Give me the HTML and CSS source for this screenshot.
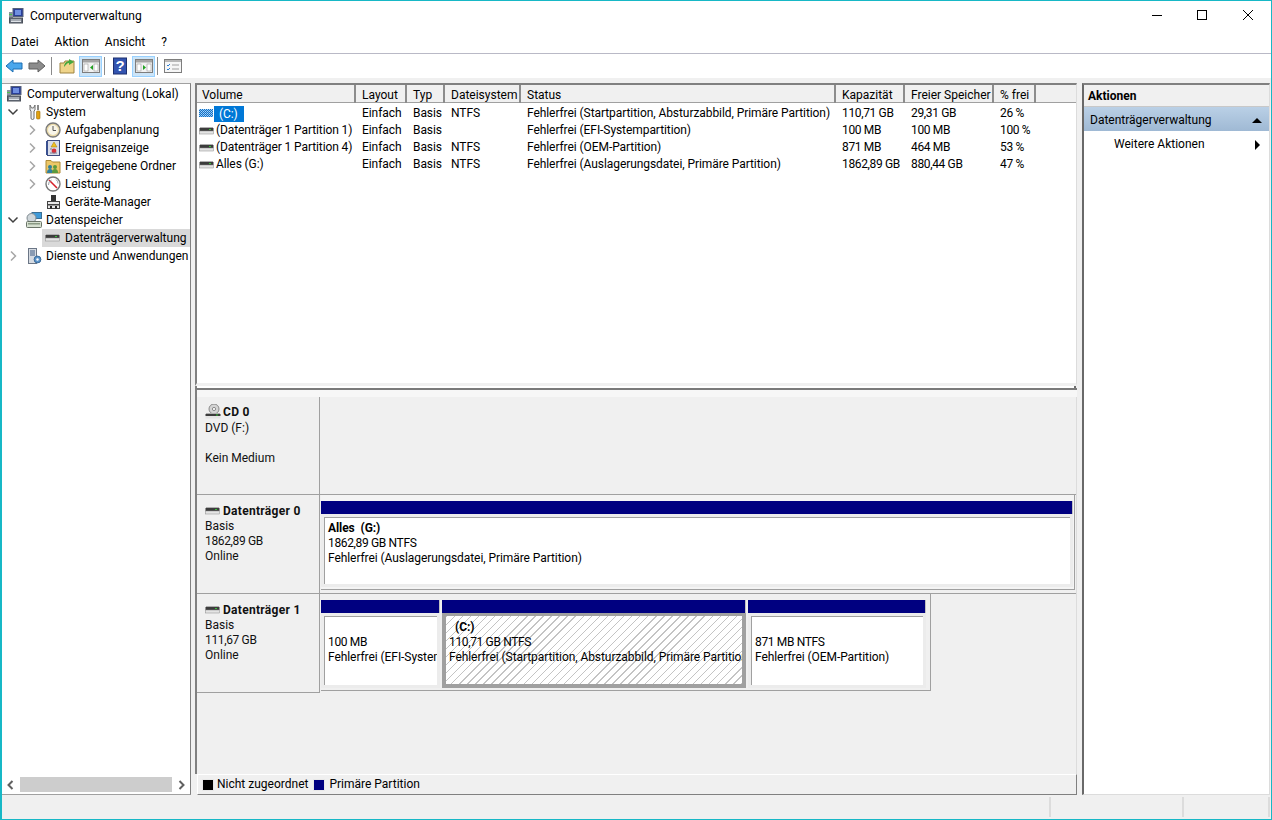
FILE: index.html
```html
<!DOCTYPE html>
<html lang="de">
<head>
<meta charset="utf-8">
<title>Computerverwaltung</title>
<link rel="stylesheet" href="styles.css">
</head>
<body>
<svg class="defs" width="0" height="0">
  <defs>
    <symbol id="computer" viewBox="0 0 16 16">
      <rect x="5" y="0.5" width="10" height="8" fill="#2a3f9a" stroke="#55617a"/>
      <rect x="7" y="2" width="6" height="5" fill="#6f8fe0"/>
      <rect x="1" y="4" width="4" height="6" fill="#8a93a0"/>
      <rect x="1.5" y="10" width="13" height="5" fill="#6d7480" stroke="#4a505a"/>
      <path d="M3 12h10M3 13.5h10" stroke="#dfe3e8"/>
      <rect x="1" y="6" width="3" height="1" fill="#4cc04c"/>
    </symbol>
    <symbol id="disk" viewBox="0 0 16 16">
      <rect x="1" y="4" width="13" height="1" fill="#b0b0b0"/>
      <rect x="0.5" y="5" width="14" height="3" fill="#3c3c3c"/>
      <rect x="0.5" y="8" width="14" height="3" fill="#e4e4e4" stroke="#888" stroke-width="0.5"/>
      <rect x="10" y="6" width="2" height="1" fill="#35c435"/>
    </symbol>
    <symbol id="vol-c" viewBox="0 0 16 16">
      <rect x="0" y="3" width="14" height="8" fill="#1570c4"/>
      <path d="M0 3.500h14M0 5.500h14M0 7.500h14M0 9.500h14" stroke="#a9d6fa" stroke-dasharray="1 1"/>
      <path d="M1 4.500h13M1 6.500h13M1 8.500h13M1 10.500h13" stroke="#7dbcf2" stroke-dasharray="1 1"/>
    </symbol>
    <symbol id="cd" viewBox="0 0 16 16">
      <circle cx="9" cy="5" r="5" fill="#d4d4d4" stroke="#8a8a8a"/>
      <circle cx="9" cy="5" r="1.6" fill="#fff" stroke="#8a8a8a"/>
      <rect x="1" y="9" width="14" height="1" fill="#b0b0b0"/>
      <rect x="0.5" y="10" width="15" height="2" fill="#3c3c3c"/>
      <rect x="0.5" y="12" width="15" height="2.5" fill="#e4e4e4"/>
      <rect x="11" y="10.500" width="2" height="1" fill="#35c435"/>
    </symbol>
    <symbol id="tools" viewBox="0 0 16 16">
      <path d="M4 1v5l1 1v7a1.5 1.5 0 0 0 3 0V7l1-1V1L7.5 4h-2z" fill="#eef0f2" stroke="#6e6e6e"/>
      <path d="M12 1v5" stroke="#8a8a8a" stroke-width="2"/>
      <rect x="10.5" y="7" width="3.5" height="8" rx="1" fill="#e2a10f" stroke="#9b6d08" stroke-width=".6"/>
    </symbol>
    <symbol id="clock" viewBox="0 0 16 16">
      <circle cx="8" cy="8" r="7" fill="#e9d9a8" stroke="#7a7a7a" stroke-width="1.4"/>
      <circle cx="8" cy="8" r="5" fill="#f8f5e9"/>
      <path d="M8 4v4.5h3" fill="none" stroke="#555"/>
    </symbol>
    <symbol id="event" viewBox="0 0 16 16">
      <rect x="2.5" y="0.5" width="12" height="15" fill="#d8dce8" stroke="#3e4b7e"/>
      <rect x="1" y="1" width="2" height="14" fill="#39508f"/>
      <path d="M9 2l3 5H6z" fill="#f0c020" stroke="#a37b0c" stroke-width=".5"/>
      <circle cx="9" cy="11" r="2.4" fill="#d7313a"/>
      <path d="M5 9h2M5 13h7" stroke="#7a7f92"/>
    </symbol>
    <symbol id="share" viewBox="0 0 16 16">
      <path d="M1 2.5h5l1.5 1.5h7.5v11H1z" fill="#ecc767" stroke="#ad8a34"/>
      <circle cx="5" cy="9" r="2" fill="#2f7f9e"/>
      <path d="M2 15c0-3 1-4 3-4s3 1 3 4z" fill="#2f7f9e"/>
      <circle cx="10" cy="9" r="2" fill="#5a9a3c"/>
      <path d="M7 15c0-3 1-4 3-4s3 1 3 4z" fill="#5a9a3c"/>
    </symbol>
    <symbol id="perf" viewBox="0 0 16 16">
      <circle cx="8" cy="8" r="7" fill="#fff" stroke="#777" stroke-width="1.4"/>
      <path d="M4 4l8 8" stroke="#d5202a" stroke-width="1.6"/>
      <path d="M3.5 9a5 5 0 0 1 3-5M11 3.5a5 5 0 0 1 2 4" fill="none" stroke="#9aa0a8"/>
    </symbol>
    <symbol id="device" viewBox="0 0 16 16">
      <rect x="6" y="1" width="5" height="6" fill="#333"/>
      <rect x="2.5" y="7.5" width="12" height="7" fill="#e8e8e8" stroke="#444"/>
      <rect x="2" y="10" width="13" height="1.5" fill="#444"/>
      <rect x="5" y="12" width="2" height="2.5" fill="#222"/>
      <rect x="10" y="12" width="2" height="2.5" fill="#222"/>
    </symbol>
    <symbol id="storage" viewBox="0 0 16 16">
      <rect x="6" y="0.5" width="9.5" height="6" fill="#3f9ad8" stroke="#3a6f95"/>
      <circle cx="5.5" cy="6" r="4.5" fill="#cfd6da" stroke="#7f8a90"/>
      <rect x="0.5" y="9.5" width="15" height="6" rx="1" fill="#d6e0d0" stroke="#6a7468"/>
      <rect x="2" y="11" width="12" height="1.5" fill="#8a9a84"/>
    </symbol>
    <symbol id="services" viewBox="0 0 16 16">
      <rect x="2.5" y="0.5" width="8" height="15" fill="#d6dbe2" stroke="#6b7686"/>
      <path d="M4 3h5M4 5h5M4 7h5" stroke="#3f5d85"/>
      <circle cx="11.5" cy="11.5" r="3.4" fill="#5b93c9" stroke="#3b6c9b"/>
      <circle cx="11.5" cy="11.5" r="1.2" fill="#fff"/>
    </symbol>
    <symbol id="chev-r" viewBox="0 0 16 16">
      <path d="M6 3.5L10.500 8 6 12.500" fill="none" stroke="#a6a6a6" stroke-width="1.500"/>
    </symbol>
    <symbol id="chev-d" viewBox="0 0 16 16">
      <path d="M3.500 5.500L8 10l4.500-4.500" fill="none" stroke="#404040" stroke-width="1.500"/>
    </symbol>
    <symbol id="pane" viewBox="0 0 20 20">
      <rect x="1.500" y="3.500" width="17" height="13" fill="#f2f2f2" stroke="#7d7d7d"/>
      <rect x="2" y="4" width="16" height="2.500" fill="#a5a5a5"/>
      <rect x="3" y="8" width="4" height="7" fill="#fff" stroke="#9a9a9a" stroke-width=".6"/>
      <rect x="13" y="8" width="4" height="7" fill="#fff" stroke="#9a9a9a" stroke-width=".6"/>
    </symbol>
  </defs>
</svg>

<div class="window">
  <header class="titlebar">
    <svg class="ico title-ico"><use href="#computer"/></svg>
    <span class="title-text">Computerverwaltung</span>
    <div class="winctl">
      <svg class="winbtn" viewBox="0 0 45 30"><path d="M16 14.500h10" stroke="#000" fill="none"/></svg>
      <svg class="winbtn" viewBox="0 0 45 30"><rect x="16.500" y="9.500" width="9" height="9" stroke="#000" fill="none"/></svg>
      <svg class="winbtn" viewBox="0 0 45 30"><path d="M17 9l10 10M27 9L17 19" stroke="#000" fill="none"/></svg>
    </div>
  </header>

  <nav class="menubar">
    <span>Datei</span><span>Aktion</span><span>Ansicht</span><span>?</span>
  </nav>

  <div class="toolbar">
    <svg class="tool" viewBox="0 0 22 22"><path d="M3 11l7-6v3h9v6h-9v3z" fill="#4aa7ec" stroke="#1c6fb3"/></svg>
    <svg class="tool" viewBox="0 0 22 22"><path d="M19 11l-7-6v3H3v6h9v3z" fill="#8c8c8c" stroke="#5e5e5e"/></svg>
    <i class="sep"></i>
    <svg class="tool" viewBox="0 0 22 22"><path d="M4 8h4l1-2h9v12H4z" fill="#efd48a" stroke="#9d8340"/><path d="M8 12c0-4 3-6 5-6V4l5 3-5 3V8c-2 0-3 2-5 4z" fill="#46a83e"/></svg>
    <span class="tool-on"><svg class="paneico" viewBox="0 0 20 20"><use href="#pane"/><path d="M12 9v5l-3-2.500z" fill="#22a022"/></svg></span>
    <i class="sep"></i>
    <svg class="tool" viewBox="0 0 22 22"><rect x="4.500" y="3" width="13" height="16" fill="#3354b0" stroke="#1d2f6f"/><text x="11" y="16" class="help-q">?</text></svg>
    <span class="tool-on"><svg class="paneico" viewBox="0 0 20 20"><use href="#pane"/><path d="M9 9v5l3-2.500z" fill="#22a022"/></svg></span>
    <i class="sep"></i>
    <svg class="tool" viewBox="0 0 22 22"><rect x="2.500" y="4.500" width="17" height="13" fill="#f6f6f6" stroke="#7d7d7d"/><rect x="3" y="5" width="16" height="2" fill="#b8b8b8"/><path d="M5 10l1 1 2-2M5 14l1 1 2-2" stroke="#2a7fd6" fill="none"/><path d="M10 10h7M10 14h7" stroke="#a0a0a0"/></svg>
  </div>

  <main class="panes">
    <aside class="tree-pane">
      <div class="tree">
        <div class="node lv0"><span class="exp"></span><svg class="ico"><use href="#computer"/></svg><span>Computerverwaltung (Lokal)</span></div>
        <div class="node lv1"><svg class="exp"><use href="#chev-d"/></svg><svg class="ico"><use href="#tools"/></svg><span>System</span></div>
        <div class="node lv2"><svg class="exp"><use href="#chev-r"/></svg><svg class="ico"><use href="#clock"/></svg><span>Aufgabenplanung</span></div>
        <div class="node lv2"><svg class="exp"><use href="#chev-r"/></svg><svg class="ico"><use href="#event"/></svg><span>Ereignisanzeige</span></div>
        <div class="node lv2"><svg class="exp"><use href="#chev-r"/></svg><svg class="ico"><use href="#share"/></svg><span>Freigegebene Ordner</span></div>
        <div class="node lv2"><svg class="exp"><use href="#chev-r"/></svg><svg class="ico"><use href="#perf"/></svg><span>Leistung</span></div>
        <div class="node lv2"><span class="exp"></span><svg class="ico"><use href="#device"/></svg><span>Geräte-Manager</span></div>
        <div class="node lv1"><svg class="exp"><use href="#chev-d"/></svg><svg class="ico"><use href="#storage"/></svg><span>Datenspeicher</span></div>
        <div class="node lv2 has-sel"><span class="exp"></span><span class="sel"><svg class="ico"><use href="#disk"/></svg><span>Datenträgerverwaltung</span></span></div>
        <div class="node lv1"><svg class="exp"><use href="#chev-r"/></svg><svg class="ico"><use href="#services"/></svg><span>Dienste und Anwendungen</span></div>
      </div>
      <div class="hscroll">
        <svg class="arrow" viewBox="0 0 16 16"><path d="M10 4L6 8l4 4" fill="none" stroke="#606060" stroke-width="2"/></svg>
        <div class="track"></div>
        <svg class="arrow" viewBox="0 0 16 16"><path d="M6 4l4 4-4 4" fill="none" stroke="#606060" stroke-width="2"/></svg>
      </div>
    </aside>

    <section class="center-pane">
      <div class="list-pane">
        <div class="row head">
          <div>Volume</div><div>Layout</div><div>Typ</div><div>Dateisystem</div><div>Status</div><div>Kapazität</div><div>Freier Speicher</div><div>% frei</div><div></div>
        </div>
        <div class="row">
          <div class="vol"><svg class="ico"><use href="#vol-c"/></svg><span class="vol-sel">(C:)</span></div><div>Einfach</div><div>Basis</div><div>NTFS</div><div>Fehlerfrei (Startpartition, Absturzabbild, Primäre Partition)</div><div class="num">110,71 GB</div><div class="num">29,31 GB</div><div class="num">26 %</div>
        </div>
        <div class="row">
          <div class="vol"><svg class="ico"><use href="#disk"/></svg><span>(Datenträger 1 Partition 1)</span></div><div>Einfach</div><div>Basis</div><div></div><div>Fehlerfrei (EFI-Systempartition)</div><div class="num">100 MB</div><div class="num">100 MB</div><div class="num">100 %</div>
        </div>
        <div class="row">
          <div class="vol"><svg class="ico"><use href="#disk"/></svg><span>(Datenträger 1 Partition 4)</span></div><div>Einfach</div><div>Basis</div><div>NTFS</div><div>Fehlerfrei (OEM-Partition)</div><div class="num">871 MB</div><div class="num">464 MB</div><div class="num">53 %</div>
        </div>
        <div class="row">
          <div class="vol"><svg class="ico"><use href="#disk"/></svg><span>Alles (G:)</span></div><div>Einfach</div><div>Basis</div><div>NTFS</div><div>Fehlerfrei (Auslagerungsdatei, Primäre Partition)</div><div class="num">1862,89 GB</div><div class="num">880,44 GB</div><div class="num">47 %</div>
        </div>
      </div>
      <div class="list-gap"></div>
      <div class="splitter"></div>

      <div class="disks">
        <div class="disk disk-cd">
          <div class="disk-label">
            <div class="disk-name cd-name"><svg class="ico"><use href="#cd"/></svg><b>CD 0</b></div>
            <div>DVD (F:)</div>
            <div class="blank"></div>
            <div>Kein Medium</div>
          </div>
          <div class="disk-map"></div>
        </div>

        <div class="disk disk-0">
          <div class="disk-label">
            <div class="disk-name"><svg class="ico"><use href="#disk"/></svg><b>Datenträger 0</b></div>
            <div>Basis</div>
            <div class="num">1862,89 GB</div>
            <div>Online</div>
          </div>
          <div class="disk-map">
            <div class="parts parts-full">
              <div class="part part-all">
                <div class="bar"></div>
                <div class="pbody">
                  <div class="pline"><b>Alles&nbsp; (G:)</b></div>
                  <div class="pline num">1862,89 GB NTFS</div>
                  <div class="pline">Fehlerfrei (Auslagerungsdatei, Primäre Partition)</div>
                </div>
              </div>
            </div>
          </div>
        </div>

        <div class="disk disk-1">
          <div class="disk-label">
            <div class="disk-name"><svg class="ico"><use href="#disk"/></svg><b>Datenträger 1</b></div>
            <div>Basis</div>
            <div class="num">111,67 GB</div>
            <div>Online</div>
          </div>
          <div class="disk-map">
            <div class="parts parts-small">
              <div class="part part-efi">
                <div class="bar"></div>
                <div class="pbody">
                  <div class="pline">&nbsp;</div>
                  <div class="pline num">100 MB</div>
                  <div class="pline">Fehlerfrei (EFI-Systempartition)</div>
                </div>
              </div>
              <div class="part part-c">
                <div class="bar"></div>
                <div class="pbody hatch">
                  <div class="pline"><b class="c-name">(C:)</b></div>
                  <div class="pline num">110,71 GB NTFS</div>
                  <div class="pline">Fehlerfrei (Startpartition, Absturzabbild, Primäre Partition)</div>
                </div>
              </div>
              <div class="part part-oem">
                <div class="bar"></div>
                <div class="pbody">
                  <div class="pline">&nbsp;</div>
                  <div class="pline num">871 MB NTFS</div>
                  <div class="pline">Fehlerfrei (OEM-Partition)</div>
                </div>
              </div>
            </div>
          </div>
        </div>
        <div class="disk-rest"></div>
      </div>

      <div class="legend">
        <i class="swatch black"></i><span>Nicht zugeordnet</span>
        <i class="swatch navy"></i><span>Primäre Partition</span>
      </div>
    </section>

    <aside class="actions-pane">
      <div class="act-head">Aktionen</div>
      <div class="act-sel"><span>Datenträgerverwaltung</span><i class="tri-up"></i></div>
      <div class="act-item"><span>Weitere Aktionen</span><i class="tri-right"></i></div>
    </aside>
  </main>

  <footer class="statusbar">
    <div class="st st-a"></div><div class="st st-b"></div><div class="st st-c"></div>
  </footer>
</div>
</body>
</html>
```

FILE: styles.css
```css
* { box-sizing: border-box; }
html, body { margin: 0; padding: 0; height: 100%; overflow: hidden; }
body {
  font-family: Roboto, "Open Sans", "Liberation Sans", sans-serif;
  font-size: 12px;
  line-height: 15px;
  color: #000;
  background: #fff;
}
.defs { position: absolute; }
.ico { width: 16px; height: 16px; flex: none; display: block; }
b { font-weight: 700; }

.window {
  width: 1272px; height: 820px;
  border: 1px solid #17b8c6;
  border-left-width: 2px;
  display: flex; flex-direction: column;
  background: #f0f0f0;
}

.titlebar { height: 30px; background: #fff; display: flex; align-items: center; padding-left: 6px; flex: none; }
.title-ico { margin-right: 6px; }
.title-text { flex: 1; }
.winctl { display: flex; }
.winbtn { width: 45px; height: 30px; display: block; }

.menubar {
  height: 23px; background: #fff; flex: none;
  display: flex; align-items: center; gap: 16px; padding: 0 0 0 9px;
  border-bottom: 1px solid #b9b9c6;
}

.toolbar { height: 24px; background: #fff; flex: none; display: flex; align-items: center; padding-left: 1px; }
.tool { width: 22px; height: 22px; display: block; flex: none; margin-right: 1px; }
.sep { width: 1px; height: 18px; background: #8a8a8a; margin: 0 4px 0 2px; flex: none; }
.tool-on { width: 23px; height: 21px; background: #cce4f7; border: 1px solid #99d1ff; display: flex; align-items: center; justify-content: center; flex: none; }
.paneico { width: 20px; height: 20px; display: block; }
.help-q { fill: #fff; font: 700 15px "Liberation Sans", sans-serif; text-anchor: middle; }

.panes { flex: 1; min-height: 0; display: flex; padding-top: 5px; gap: 4px; }

.tree-pane {
  width: 189px; flex: none; background: #fff;
  border-top: 1px solid #a0a0a0; border-right: 1px solid #808080; border-bottom: 1px solid #a0a0a0;
  display: flex; flex-direction: column; overflow: hidden;
}
.tree { flex: 1; overflow: hidden; padding-top: 1px; }
.node { height: 18px; display: flex; align-items: center; white-space: nowrap; }
.exp { width: 16px; height: 16px; flex: none; display: block; margin-right: 5px; }
.node .ico { margin-right: 4px; }
.lv0 { padding-left: 4px; }
.lv0 .ico { margin-right: 5px; }
.lv0 .exp { display: none; }
.lv1 { padding-left: 3px; }
.lv2 { padding-left: 22px; }
.has-sel .exp { margin-right: 2px; }
.sel { display: flex; align-items: center; background: #d9d9d9; height: 18px; padding: 0 3px; }

.hscroll { height: 17px; display: flex; align-items: center; flex: none; margin-bottom: 1px; }
.arrow { width: 17px; height: 16px; display: block; flex: none; }
.track { flex: 1; height: 15px; background: #cdcdcd; margin: 0 1px; }

.center-pane { width: 882px; flex: none; display: flex; flex-direction: column; }

.list-pane {
  height: 303px; flex: none; background: #fff;
  border-top: 2px solid #808080; border-left: 2px solid #808080; border-right: 1px solid #dcdcdc;
  border-bottom: 3px solid #f0f0f0;
  overflow: hidden;
}
.row {
  display: grid;
  grid-template-columns: 159px 51px 38px 76px 315px 69px 89px 42px 1fr;
  height: 17px; align-items: center;
  letter-spacing: -0.07px;
}
.row > div { padding-left: 6px; white-space: nowrap; overflow: hidden; }
.row .vol { display: flex; align-items: center; padding-left: 2px; overflow: visible; }
.vol .ico { margin-right: 1px; }
.vol-sel { background: #0078d7; color: #fff; padding: 0 6px 0 5px; margin-left: -2px; line-height: 16px; }
.vol .ico + span:not(.vol-sel) { letter-spacing: -0.1px; }
.head { height: 20px; padding-bottom: 2px; align-items: stretch; background: linear-gradient(#f0f0f0 18px, #fff 18px); letter-spacing: 0; }
.head > div { height: 18px; line-height: 20px; border-right: 2px solid #8c8c8c; background: #f0f0f0; box-shadow: inset 0 -1px #a0a0a0; }
.head > div:first-child { padding-left: 5px; }
.head > div:last-child { border-right: 0; }
.num { letter-spacing: -0.35px; }

.list-gap { height: 2px; flex: none; background: #fff; border-left: 2px solid #808080; border-right: 2px solid #6e6e6e; margin-right: 1px; }

.splitter {
  height: 9px; flex: none; background: #f7f7f7;
  border-top: 2px solid #7a7a7a; border-left: 2px solid #808080;
}

.disks { flex: 1; min-height: 0; display: flex; flex-direction: column; background: #f0f0f0; border-left: 2px solid #808080; border-right: 1px solid #dcdcdc; }
.disk { display: flex; flex: none; border-bottom: 1px solid #a0a0a0; }
.disk-cd { height: 98px; }
.disk-0 { height: 99px; }
.disk-1 { height: 99px; border-bottom: 0; }
.disk-label { width: 123px; flex: none; padding: 8px 0 0 8px; line-height: 15px; background: #f0f0f0; border-right: 1px solid #a0a0a0; color: #111; }
.disk-1 .disk-label { border-bottom: 1px solid #a0a0a0; }
.disk-name { display: flex; align-items: center; gap: 2px; height: 16px; }
.disk-name b { letter-spacing: 0.3px; }
.cd-name { margin-top: -1px; margin-bottom: 1px; }
.blank { height: 15px; }
.disk-map { flex: 1; min-width: 0; padding: 0 1px 0 1px; }

.parts { display: flex; padding: 6px 1px 2px 0; border-right: 1px solid #a0a0a0; border-bottom: 1px solid #a0a0a0; }
.parts-full { height: 95px; background: #f4f4f4; }
.parts-small { width: 610px; height: 97px; }
.part { display: flex; flex-direction: column; flex: none; min-width: 0; }
.part-all { flex: 1; }
.part-efi { width: 119px; }
.part-c { width: 304px; margin-left: 2px; }
.part-oem { width: 178px; margin-left: 2px; }
.bar { height: 13px; background: #000080; flex: none; border-right: 1px solid #c0c0c0; }
.pbody {
  flex: 1; overflow: hidden; background: #fff;
  border: 3px solid #ececec;
  box-shadow: inset 1px 1px #a0a0a0;
  padding: 4px 0 0 4px;
  white-space: nowrap;
  letter-spacing: -0.07px;
}
.pline { height: 15px; line-height: 15px; }
.hatch {
  background: repeating-linear-gradient(135deg, #c4c4c4 0, #c4c4c4 1px, #fff 1px, #fff 5.7px);
  border: 4px solid #a0a0a0; border-top-width: 3px;
  box-shadow: none;
  padding: 4px 0 0 3px;
}
.c-name { margin-left: 6px; }

.disk-rest { flex: 1; }

.legend {
  height: 21px; flex: none; display: flex; align-items: center;
  background: #f0f0f0; border: 1px solid #fff; border-right-color: #808080; border-bottom-color: #808080;
  margin-left: 2px; padding-left: 4px;
}
.swatch { width: 12px; height: 12px; border: 1px solid #e8e8e8; flex: none; margin-right: 3px; }
.swatch.black { background: #000; }
.swatch.navy { background: #000080; margin-left: 5px; margin-right: 4px; }

.actions-pane { width: 188px; margin-left: 1px; flex: none; background: #fff; border-left: 2px solid #696969; border-top: 2px solid #808080; border-bottom: 1px solid #dcdcdc; border-right: 1px solid #dcdcdc; }
.act-head { height: 22px; background: #f0f0f0; font-weight: 700; line-height: 22px; padding-left: 4px; border-bottom: 1px solid #c8c8c8; }
.act-sel { height: 24px; background: linear-gradient(#bad0e6, #9fb9d4); display: flex; align-items: center; justify-content: space-between; padding: 2px 7px 0 6px; }
.tri-up { width: 0; height: 0; border-left: 5px solid transparent; border-right: 5px solid transparent; border-bottom: 5px solid #000; }
.act-item { height: 26px; display: flex; align-items: center; justify-content: space-between; padding: 1px 9px 0 30px; }
.tri-right { width: 0; height: 0; border-top: 5px solid transparent; border-bottom: 5px solid transparent; border-left: 5px solid #000; }

.statusbar { height: 24px; flex: none; display: flex; padding: 2px 0 2px; background: #f0f0f0; }
.st { border-right: 2px solid #dcdcdc; }
.st-a { width: 1049px; }
.st-b { width: 133px; }
.st-c { width: 86px; }
```
